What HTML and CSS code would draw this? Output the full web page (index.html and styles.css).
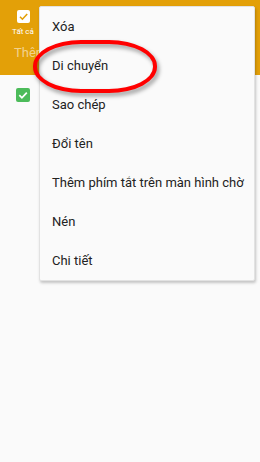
FILE: index.html
```html
<!DOCTYPE html>
<html lang="vi">
<head>
    <meta charset="UTF-8">
    <meta name="viewport" content="width=device-width, initial-scale=1.0">
    <title>Tệp của tôi</title>
    <link rel="stylesheet" href="styles.css">
</head>
<body>
    <div class="screen">
        <div class="app-header">
            <div class="select-all">
                <span class="check check-white">
                    <svg width="13" height="13" viewBox="0 0 13 13"><path d="M3 6.8l2.4 2.4L10.2 4" fill="none" stroke="#e3a008" stroke-width="1.6"/></svg>
                </span>
                <span class="select-label">Tất cả</span>
            </div>
            <div class="tab-label">Thêm</div>
        </div>

        <div class="file-list">
            <div class="file-row">
                <span class="check check-green">
                    <svg width="14" height="14" viewBox="0 0 14 14"><path d="M3.3 7.2l2.6 2.6L10.8 4.6" fill="none" stroke="#fff" stroke-width="1.7"/></svg>
                </span>
            </div>
        </div>

        <div class="popup-menu">
            <div class="menu-item">Xóa</div>
            <div class="menu-item">Di chuyển</div>
            <div class="menu-item">Sao chép</div>
            <div class="menu-item">Đổi tên</div>
            <div class="menu-item">Thêm phím tắt trên màn hình chờ</div>
            <div class="menu-item">Nén</div>
            <div class="menu-item">Chi tiết</div>
        </div>

        <div class="highlight"></div>
    </div>
</body>
</html>
```

FILE: styles.css
```css
body {
    margin: 0;
    background-color: #fafafa;
    font-family: Roboto, "Noto Sans", sans-serif;
}

.screen {
    position: relative;
    width: 260px;
    height: 462px;
    overflow: hidden;
    background-color: #fafafa;
}

.app-header {
    height: 75px;
    background-color: #e3a008;
    box-sizing: border-box;
    padding: 10px 0 0 8px;
}

.select-all {
    width: 30px;
    display: flex;
    flex-direction: column;
    align-items: center;
}

.check {
    display: flex;
    align-items: center;
    justify-content: center;
    border-radius: 2px;
}

.check-white {
    width: 13px;
    height: 13px;
    background-color: #fff;
}

.select-label {
    margin-top: 4px;
    font-size: 8px;
    color: #fff;
    white-space: nowrap;
}

.tab-label {
    margin-top: 9px;
    padding-left: 6px;
    font-size: 13px;
    color: rgba(255, 255, 255, 0.55);
}

.file-list {
    padding: 13px 0 0 16px;
}

.check-green {
    width: 14px;
    height: 14px;
    background-color: #4cbb5a;
}

.popup-menu {
    position: absolute;
    top: 6px;
    left: 39px;
    width: 214px;
    background-color: #fafafa;
    border: 1px solid #e2e2e2;
    border-radius: 2px;
    box-shadow: 1px 2px 3px rgba(0, 0, 0, 0.22);
}

.menu-item {
    height: 39px;
    display: flex;
    align-items: center;
    padding-left: 12px;
    font-size: 13px;
    color: #222;
    white-space: nowrap;
}

.highlight {
    position: absolute;
    top: 40px;
    left: 33px;
    width: 116px;
    height: 45px;
    border: 4px solid #ff0000;
    border-radius: 48px / 26px;
    filter: drop-shadow(2px 3px 2px rgba(0, 0, 0, 0.4));
}
```
